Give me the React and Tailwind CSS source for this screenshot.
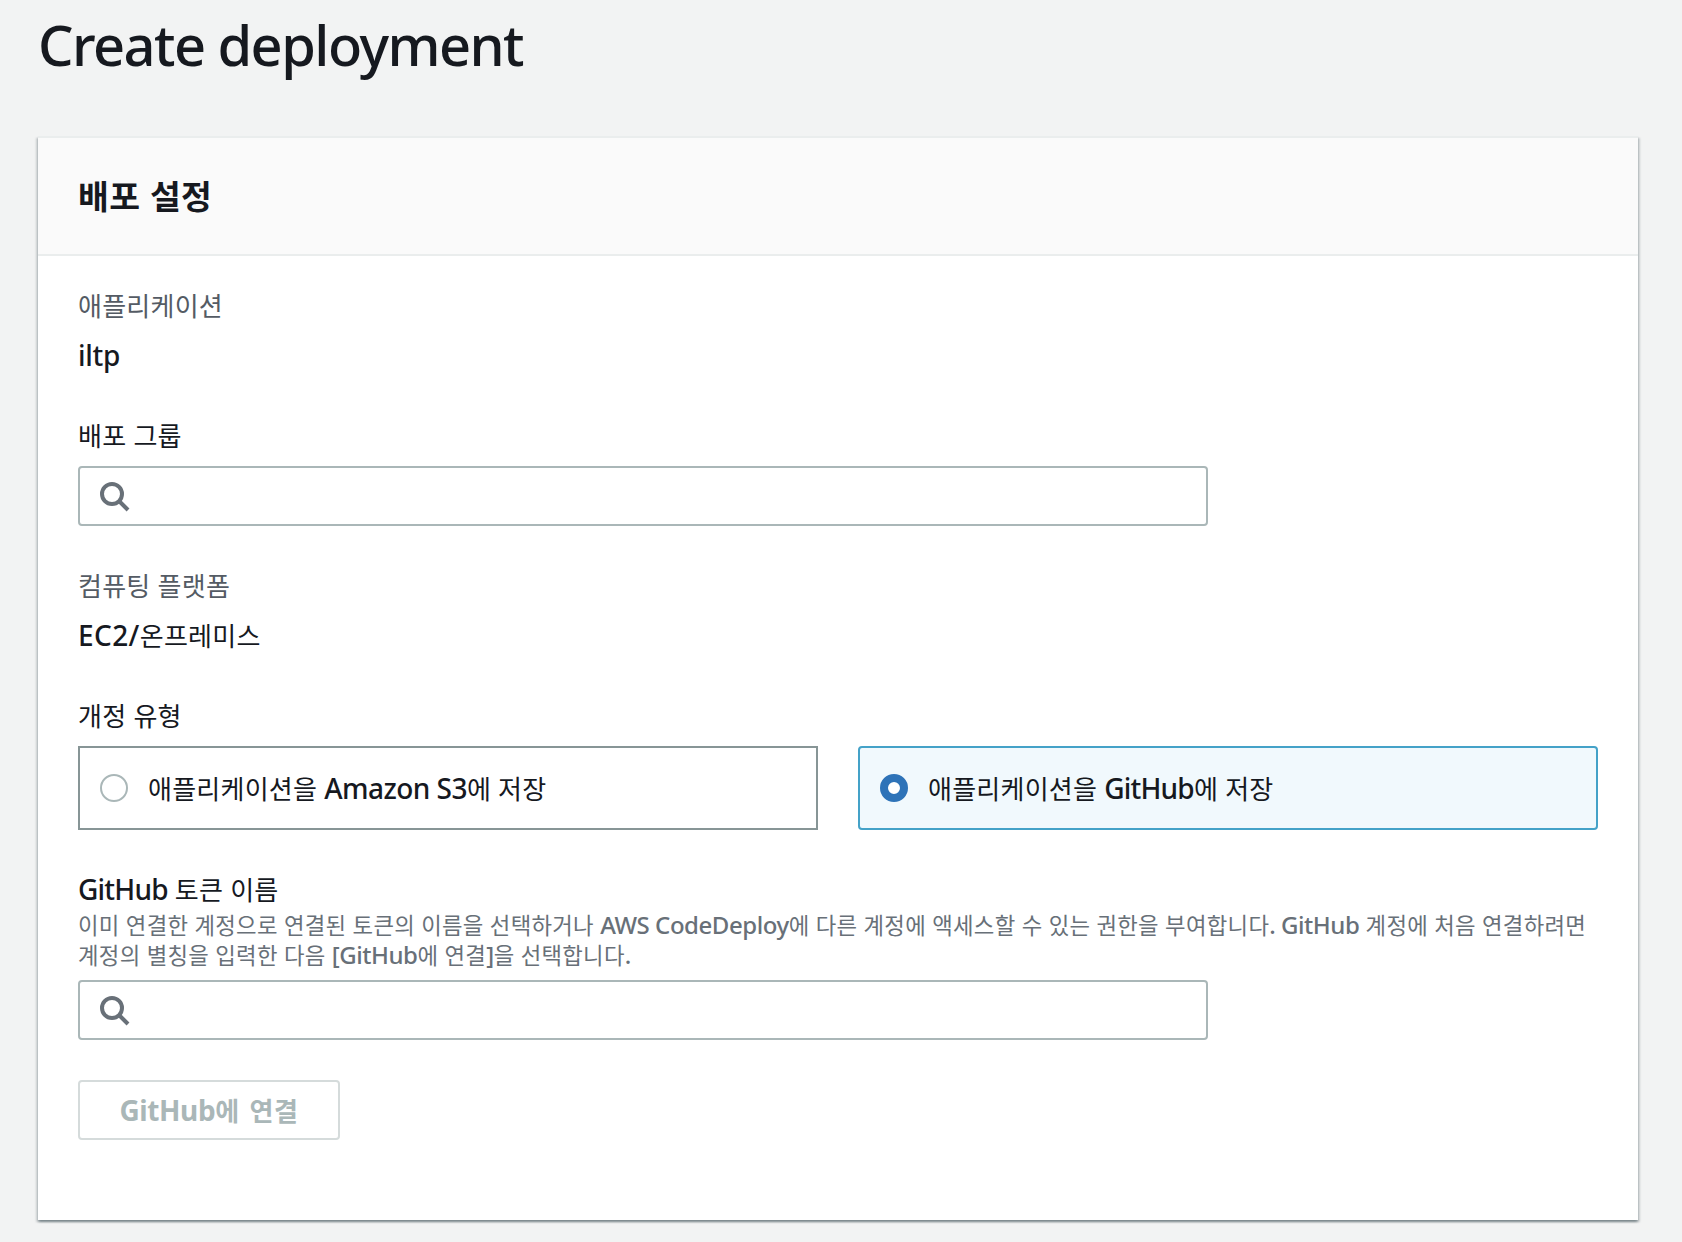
const LATIN = /([A-Za-z0-9/.,[\]]+(?: [A-Za-z0-9]+)*)/;

// Latin runs keep the base face; Hangul runs use a slightly smaller CJK face.
function Mixed({ text, latin = "", hangul = "tracking-[0.22px] [word-spacing:1px]" }) {
  return text.split(LATIN).map((part, i) =>
    i % 2 === 1 ? (
      <span key={i} className={latin}>{part}</span>
    ) : (
      <span
        key={i}
        className={`font-['Noto_Sans_CJK_KR',sans-serif] text-[0.93em] leading-[0] ${hangul}`}
      >
        {part}
      </span>
    )
  );
}

function Line({ text, latin = "tracking-[-0.8px]", className = "" }) {
  return (
    <div className={`h-[30px] text-[28px] leading-[30px] whitespace-nowrap ${className}`}>
      <Mixed text={text} latin={`font-medium ${latin}`} />
    </div>
  );
}

function SearchInput() {
  return (
    <div className="flex h-[60px] w-[1130px] items-center rounded-[4px] border-2 border-[#aab7b8] bg-white pl-5">
      <svg width="32" height="32" viewBox="0 0 32 32" fill="none" stroke="#687078" strokeWidth="4">
        <circle cx="12" cy="14" r="10" />
        <path d="M19 21l9 9" />
      </svg>
    </div>
  );
}

function RadioTile({ text, latin, selected }) {
  return (
    <label
      className={
        selected
          ? "flex h-[84px] flex-1 items-center gap-5 rounded-[4px] border-2 border-[#44a2c8] bg-[#f1f9fd] pl-5"
          : "flex h-[84px] flex-1 items-center gap-5 border-2 border-[#879596] bg-white pl-5"
      }
    >
      <span
        className={
          selected
            ? "size-7 rounded-full border-8 border-[#2e73b8] bg-white"
            : "size-7 rounded-full border-2 border-[#aab7b8] bg-white"
        }
      />
      <Line text={text} latin={latin} />
    </label>
  );
}

export default function App() {
  return (
    <div className="h-[1242px] w-[1682px] bg-[#f2f3f3] pt-2 pl-[38px] font-['Noto_Sans','Noto_Sans_CJK_KR',sans-serif] text-[#16191f]">
      <h1 className="h-[72px] text-[56px] leading-[72px] font-medium tracking-[-1.57px] whitespace-nowrap">
        Create deployment
      </h1>
      <section className="mt-14 flex h-[1084px] w-[1600px] flex-col border-t-2 border-[#eaeded] bg-white shadow-[0_2px_2px_rgba(0,28,36,0.3),2px_2px_2px_rgba(0,28,36,0.15),-2px_2px_2px_rgba(0,28,36,0.15)]">
        <header className="flex h-[118px] items-center border-b-2 border-[#eaeded] bg-[#fafafa] px-10">
          <h2 className="text-[36px] leading-[44px] font-bold">
            <Mixed text="배포 설정" hangul="tracking-[0.4px] [word-spacing:1.5px]" />
          </h2>
        </header>
        <div className="flex flex-col px-10 pt-[34px]">
          <Line text="애플리케이션" className="text-[#545b64]" />
          <Line text="iltp" latin="tracking-[-0.3px]" className="mt-5" />

          <Line text="배포 그룹" className="mt-[50px] mb-4" />
          <SearchInput />

          <Line text="컴퓨팅 플랫폼" className="mt-11 text-[#545b64]" />
          <Line text="EC2/온프레미스" latin="tracking-[0.4px]" className="mt-5" />

          <Line text="개정 유형" className="mt-[50px] mb-4" />
          <div className="flex gap-10">
            <RadioTile text="애플리케이션을 Amazon S3에 저장" latin="tracking-[-0.55px]" />
            <RadioTile text="애플리케이션을 GitHub에 저장" selected />
          </div>

          <Line text="GitHub 토큰 이름" className="mt-11" />
          <p className="mt-1.5 mb-2.5 text-[24px] leading-[30px] whitespace-nowrap text-[#687078]">
            <Mixed
              latin="font-medium tracking-[-0.45px]"
              hangul="tracking-[0.29px] [word-spacing:0.9px]"
              text="이미 연결한 계정으로 연결된 토큰의 이름을 선택하거나 AWS CodeDeploy에 다른 계정에 액세스할 수 있는 권한을 부여합니다. GitHub 계정에 처음 연결하려면"
            />
            <br />
            <Mixed
              latin="font-medium tracking-[-0.45px]"
              hangul="tracking-[0.29px] [word-spacing:0.9px]"
              text="계정의 별칭을 입력한 다음 [GitHub에 연결]을 선택합니다."
            />
          </p>
          <SearchInput />

          <button
            disabled
            className="mt-10 h-[60px] w-[262px] rounded-[4px] border-2 border-[#d5dbdb] bg-white text-[28px] leading-[30px] font-bold whitespace-nowrap text-[#aab7b8]"
          >
            <Mixed
              text="GitHub에 연결"
              latin="tracking-[-0.4px]"
              hangul="tracking-[0.5px] [word-spacing:3.5px]"
            />
          </button>
        </div>
      </section>
    </div>
  );
}
